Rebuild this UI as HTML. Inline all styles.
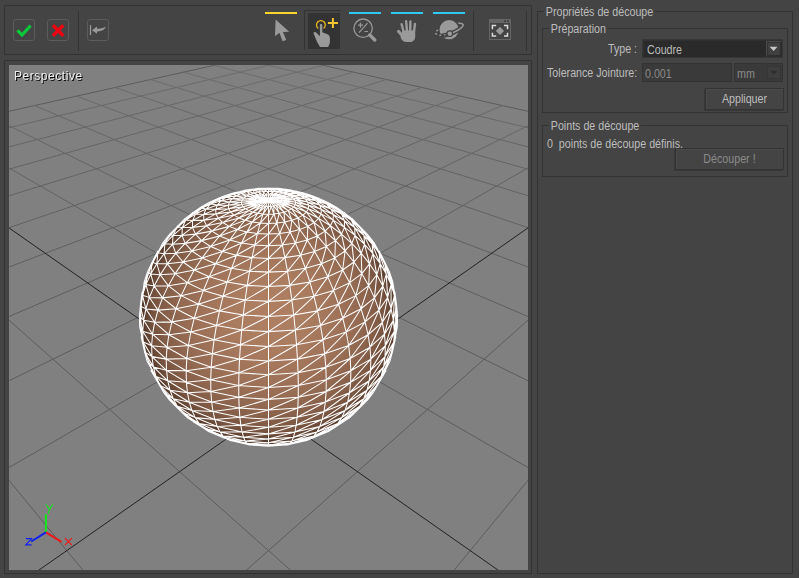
<!DOCTYPE html>
<html><head><meta charset="utf-8">
<style>
*{box-sizing:border-box;margin:0;padding:0}
html,body{width:799px;height:578px;overflow:hidden;background:#444444;font-family:"Liberation Sans",sans-serif;font-size:11px;color:#bcbcbc}
.a{position:absolute}
.frame{position:absolute;border:1px solid #333333}
.btn{position:absolute;width:22px;height:22px;border:1px solid #5c5c5c;border-radius:3px}
.sep{position:absolute;width:1px;background:#333333}
.bar{position:absolute;height:2px}
.txt{position:absolute;white-space:pre;font-size:12px;line-height:14px;transform:scaleX(0.89);transform-origin:0 0}
.gb{position:absolute;border:1px solid #333333}
.gbt{position:absolute;background:#444444;padding:0 2px 0 2px;white-space:pre;font-size:12px;line-height:14px;transform:scaleX(0.89);transform-origin:0 0}
</style></head><body>
<!-- toolbar -->
<div class="frame" style="left:4px;top:5px;width:528px;height:50px"></div>
<div class="btn" style="left:13px;top:19px"></div>
<svg class="a" style="left:13px;top:19px" width="22" height="22"><path d="M4.4 11.4L9 16L17.6 6.7" stroke="#0ac83a" stroke-width="3.2" fill="none"/></svg>
<div class="btn" style="left:47px;top:19px"></div>
<svg class="a" style="left:47px;top:19px" width="22" height="22"><path d="M5.9 6.3L16.3 16.7M16.3 6.3L5.9 16.7" stroke="#ec0510" stroke-width="3.4" fill="none"/></svg>
<div class="sep" style="left:78px;top:11px;height:40px"></div>
<div class="btn" style="left:87px;top:19px"></div>
<svg class="a" style="left:87px;top:19px" width="22" height="22"><path d="M3.5 6v10" stroke="#999" stroke-width="1.3"/><path d="M5 11.2L10 7.5V9.8C13 10 16 9.5 19 7.6C17.5 11 14.5 12.5 10 12.4V14.8Z" fill="#999"/></svg>

<div class="bar" style="left:265px;top:12px;width:32px;background:#fcd52c"></div>
<svg class="a" style="left:265px;top:15px" width="33" height="30"><path d="M10.6 4.6L10 21.3L14.4 17.7L17.6 26.3L21.2 25.1L18 16.9L24.2 16.7Z" fill="#9a9a9a"/></svg>

<div class="a" style="left:304px;top:10px;width:37px;height:40px;border-left:1px solid #333;border-top:1px solid #333"></div>
<div class="a" style="left:308px;top:13px;width:32px;height:36px;background:#333333"></div>
<svg class="a" style="left:308px;top:13px" width="32" height="36"><path d="M10.2 15.4A4.4 4.4 0 1 1 15.6 15.4" stroke="#e8b820" stroke-width="1.3" fill="none"/><path d="M19.9 10h10.1M24.9 5v9.9" stroke="#f2c630" stroke-width="2"/><path d="M11.9 12C11.9 10.6 14.3 10.6 14.3 12V19.3L19.5 21.3C21.2 22 21.9 23.5 21.9 25.5V29.5C21.5 31.5 20.3 33.2 20.3 34H12C11.2 32.5 9.8 30 8.8 28.2L5.6 20.6C5.2 19.2 6.8 18.3 7.8 19.3L11.9 23.2Z" fill="#9a9a9a"/></svg>

<div class="bar" style="left:349px;top:12px;width:32px;background:#2ec8f0"></div>
<svg class="a" style="left:349px;top:15px" width="33" height="30"><circle cx="14.1" cy="13.2" r="9.2" stroke="#999" stroke-width="1.3" fill="none"/><path d="M20.8 20L25.8 25" stroke="#999" stroke-width="3.4" stroke-linecap="round"/><path d="M9 10.2h5M11.5 7.7v5M10 17.6L18.5 8.2M15.4 16.5h3.6" stroke="#999" stroke-width="1.2"/></svg>

<div class="bar" style="left:391px;top:12px;width:32px;background:#2ec8f0"></div>
<svg class="a" style="left:391px;top:15px" width="33" height="30"><g stroke="#9a9a9a" stroke-linecap="round" fill="none"><path d="M10.6 9.2L13 18M15.1 6.2L16.1 17M19.4 6.5L19.2 17M24 9L22.7 18" stroke-width="2.4"/><path d="M7.5 16.3L12 21.5" stroke-width="2.9"/></g><path d="M11.8 15.5H24.2V21.5C24.2 25 22 27 18.5 27H15.5C12.5 27 10.5 25 9.6 22.2L9.8 19.5Z" fill="#9a9a9a"/></svg>

<div class="bar" style="left:433px;top:12px;width:32px;background:#2ec8f0"></div>
<svg class="a" style="left:433px;top:15px" width="33" height="30"><circle cx="16.1" cy="14.7" r="9.6" fill="#9a9a9a"/><path d="M28.97 8.73L29.45 8.97L29.80 9.28L30.01 9.64L30.08 10.05L30.01 10.50L29.80 11.00L29.46 11.54L28.98 12.10L28.37 12.70L27.64 13.31L26.80 13.94L25.84 14.57L24.79 15.21L23.66 15.84L22.45 16.46L21.17 17.06L19.85 17.64L18.48 18.19L17.10 18.70L15.70 19.17L14.31 19.60L12.93 19.98L11.59 20.31L10.29 20.58L9.05 20.79L7.88 20.95L6.79 21.03L5.80 21.06L4.91 21.02" stroke="#444" stroke-width="4.6" fill="none"/><path d="M25.32 8.37L26.15 8.34L26.91 8.35L27.59 8.41L28.21 8.50L28.74 8.64L29.18 8.82L29.54 9.04L29.81 9.29L29.99 9.58L30.07 9.91L30.06 10.27L29.96 10.65L29.77 11.07L29.48 11.51L29.10 11.97L28.64 12.44L28.10 12.94L27.47 13.44L26.77 13.95L26.00 14.47L25.16 14.99L24.26 15.51L23.31 16.02L22.30 16.53L21.26 17.02L20.18 17.49L19.08 17.95L17.95 18.39L16.82 18.80" stroke="#9a9a9a" stroke-width="1.5" fill="none"/><circle cx="16.8" cy="18.7" r="2.8" fill="#9a9a9a" stroke="#444" stroke-width="1.1"/><ellipse cx="4.2" cy="15.6" rx="1.1" ry="0.8" transform="rotate(-40 4.2 15.6)" fill="#9a9a9a"/><ellipse cx="3.1" cy="18.9" rx="1.2" ry="0.8" transform="rotate(30 3.1 18.9)" fill="#9a9a9a"/><ellipse cx="7.3" cy="20.2" rx="1.2" ry="0.75" fill="#9a9a9a"/><ellipse cx="11.7" cy="19.8" rx="0.9" ry="0.8" fill="#9a9a9a"/></svg>

<div class="sep" style="left:473px;top:11px;height:40px"></div>
<svg class="a" style="left:489px;top:19px" width="22" height="21"><rect x="0.5" y="0.5" width="21" height="20" fill="#444" stroke="#666"/><rect x="0" y="0" width="22" height="4" fill="#666"/><rect x="15" y="1.2" width="2" height="1.8" fill="#444"/><rect x="18" y="1.2" width="2" height="1.8" fill="#444"/><path d="M3.4 10.2V6.6H7.2M15 6.6H18.5V10.2M18.5 13.8V17H15M7.2 17H3.4V13.8" stroke="#dcdcdc" stroke-width="1.5" fill="none"/><path d="M10.95 7.8L15.05 11.95L10.95 16.05L6.85 11.95Z" fill="#999"/></svg>
<div class="sep" style="left:526px;top:11px;height:40px"></div>

<!-- viewport -->
<div class="frame" style="left:4px;top:60px;width:528px;height:514px"></div>
<div class="a" style="left:9px;top:65px;width:519px;height:505px;background:#808080;overflow:hidden">
<svg width="519" height="505" viewBox="0 0 519 505" style="position:absolute;left:0;top:0">
<defs><radialGradient id="sg" cx="0.5" cy="0.5" r="0.5" fx="0.52" fy="0.47"><stop offset="0.00" stop-color="#ad7e62"/><stop offset="0.10" stop-color="#ad7e62"/><stop offset="0.20" stop-color="#ab7d61"/><stop offset="0.30" stop-color="#a97b5f"/><stop offset="0.40" stop-color="#a5785d"/><stop offset="0.50" stop-color="#a0745a"/><stop offset="0.60" stop-color="#9a6f56"/><stop offset="0.70" stop-color="#926951"/><stop offset="0.80" stop-color="#87604a"/><stop offset="0.90" stop-color="#775440"/><stop offset="1.00" stop-color="#4e3426"/></radialGradient></defs>
<path d="M259.5 -11.9L233.14 -5.99M233.14 -5.99L204.86 0.36M204.86 0.36L174.44 7.18M174.44 7.18L141.62 14.53M141.62 14.53L106.12 22.49M106.12 22.49L67.59 31.13M67.59 31.13L25.63 40.54M25.63 40.54L-20.25 50.83M-20.25 50.83L-70.63 62.12M-70.63 62.12L-126.19 74.58M-126.19 74.58L-187.78 88.39M-187.78 88.39L-256.43 103.78M-256.43 103.78L-333.44 121.05M-333.44 121.05L-420.44 140.55M-420.44 140.55L-519.49 162.76M-519.49 162.76L-633.29 188.28M-633.29 188.28L-765.41 217.9M-765.41 217.9L-920.64 252.7M-920.64 252.7L-1105.63 294.18M-1105.63 294.18L-1329.86 344.46M259.5 -11.9L285.86 -5.99M285.86 -5.99L314.14 0.36M314.14 0.36L344.56 7.18M344.56 7.18L377.38 14.53M377.38 14.53L412.88 22.49M412.88 22.49L451.41 31.13M451.41 31.13L493.37 40.54M493.37 40.54L539.25 50.83M539.25 50.83L589.63 62.12M589.63 62.12L645.19 74.58M645.19 74.58L706.78 88.39M706.78 88.39L775.43 103.78M775.43 103.78L852.44 121.05M852.44 121.05L939.44 140.55M939.44 140.55L1038.49 162.76M1038.49 162.76L1152.29 188.28M1152.29 188.28L1284.41 217.9M1284.41 217.9L1439.64 252.7M1439.64 252.7L1624.63 294.18M1624.63 294.18L1848.86 344.46M-961.93 294.18L-1170.92 344.46M-1170.92 344.46L-1429.5 406.66M1480.93 294.18L1689.92 344.46M1689.92 344.46L1948.5 406.66M-818.23 294.18L-1011.99 344.46M-1011.99 344.46L-1251.71 406.66M-1251.71 406.66L-1555.95 485.6M1337.23 294.18L1530.99 344.46M1530.99 344.46L1770.71 406.66M1770.71 406.66L2074.95 485.6M-674.54 294.18L-853.05 344.46M-853.05 344.46L-1073.92 406.66M-1073.92 406.66L-1354.24 485.6M-1354.24 485.6L-1721.74 589.1M1193.54 294.18L1372.05 344.46M1372.05 344.46L1592.92 406.66M1592.92 406.66L1873.24 485.6M1873.24 485.6L2240.74 589.1M-530.84 294.18L-694.12 344.46M-694.12 344.46L-896.13 406.66M-896.13 406.66L-1152.52 485.6M-1152.52 485.6L-1488.65 589.1M-1488.65 589.1L-1948.59 730.72M1049.84 294.18L1213.12 344.46M1213.12 344.46L1415.13 406.66M1415.13 406.66L1671.52 485.6M1671.52 485.6L2007.65 589.1M2007.65 589.1L2467.59 730.72M-387.14 294.18L-535.18 344.46M-535.18 344.46L-718.34 406.66M-718.34 406.66L-950.8 485.6M-950.8 485.6L-1255.57 589.1M-1255.57 589.1L-1672.58 730.72M-1672.58 730.72L-2277.85 936.27M906.14 294.18L1054.18 344.46M1054.18 344.46L1237.34 406.66M1237.34 406.66L1469.8 485.6M1469.8 485.6L1774.57 589.1M1774.57 589.1L2191.58 730.72M2191.58 730.72L2796.85 936.27M-243.44 294.18L-376.24 344.46M-376.24 344.46L-540.55 406.66M-540.55 406.66L-749.08 485.6M-749.08 485.6L-1022.48 589.1M-1022.48 589.1L-1396.57 730.72M-1396.57 730.72L-1939.53 936.27M-1939.53 936.27L-2799.08 1261.67M762.44 294.18L895.24 344.46M895.24 344.46L1059.55 406.66M1059.55 406.66L1268.08 485.6M1268.08 485.6L1541.48 589.1M1541.48 589.1L1915.57 730.72M1915.57 730.72L2458.53 936.27M2458.53 936.27L3318.08 1261.67M-99.74 294.18L-217.31 344.46M-217.31 344.46L-362.76 406.66M-362.76 406.66L-547.37 485.6M-547.37 485.6L-789.39 589.1M-789.39 589.1L-1120.55 730.72M-1120.55 730.72L-1601.22 936.27M-1601.22 936.27L-2362.14 1261.67M-2362.14 1261.67L-3749.27 1854.87M618.74 294.18L736.31 344.46M736.31 344.46L881.76 406.66M881.76 406.66L1066.37 485.6M1066.37 485.6L1308.39 589.1M1308.39 589.1L1639.55 730.72M1639.55 730.72L2120.22 936.27M2120.22 936.27L2881.14 1261.67M2881.14 1261.67L4268.27 1854.87M43.95 294.18L-58.37 344.46M-58.37 344.46L-184.97 406.66M-184.97 406.66L-345.65 485.6M-345.65 485.6L-556.3 589.1M-556.3 589.1L-844.54 730.72M-844.54 730.72L-1262.91 936.27M-1262.91 936.27L-1925.2 1261.67M-1925.2 1261.67L-3132.53 1854.87M-3132.53 1854.87L-6028.18 3277.57M475.05 294.18L577.37 344.46M577.37 344.46L703.97 406.66M703.97 406.66L864.65 485.6M864.65 485.6L1075.3 589.1M1075.3 589.1L1363.54 730.72M1363.54 730.72L1781.91 936.27M1781.91 936.27L2444.2 1261.67M2444.2 1261.67L3651.53 1854.87M3651.53 1854.87L6547.18 3277.57M187.65 294.18L100.56 344.46M100.56 344.46L-7.18 406.66M-7.18 406.66L-143.93 485.6M-143.93 485.6L-323.22 589.1M-323.22 589.1L-568.53 730.72M-568.53 730.72L-924.59 936.27M-924.59 936.27L-1488.26 1261.67M-1488.26 1261.67L-2515.8 1854.87M-2515.8 1854.87L-4980.23 3277.57M-4980.23 3277.57L-18901.1 11314M331.35 294.18L418.44 344.46M418.44 344.46L526.18 406.66M526.18 406.66L662.93 485.6M662.93 485.6L842.22 589.1M842.22 589.1L1087.53 730.72M1087.53 730.72L1443.59 936.27M1443.59 936.27L2007.26 1261.67M2007.26 1261.67L3034.8 1854.87M3034.8 1854.87L5499.23 3277.57M5499.23 3277.57L19420.1 11314M475.05 294.18L418.44 344.46M418.44 344.46L348.39 406.66M348.39 406.66L259.5 485.6M259.5 485.6L142.96 589.1M142.96 589.1L-16.51 730.72M-16.51 730.72L-247.97 936.27M-247.97 936.27L-614.38 1261.67M-614.38 1261.67L-1282.33 1854.87M-1282.33 1854.87L-2884.34 3277.57M-2884.34 3277.57L-11933.61 11314M-11933.61 11314L-63331.14 56958.85M43.95 294.18L100.56 344.46M100.56 344.46L170.61 406.66M170.61 406.66L259.5 485.6M259.5 485.6L376.04 589.1M376.04 589.1L535.51 730.72M535.51 730.72L766.97 936.27M766.97 936.27L1133.38 1261.67M1133.38 1261.67L1801.33 1854.87M1801.33 1854.87L3403.34 3277.57M3403.34 3277.57L12452.61 11314M12452.61 11314L63850.14 56958.85M618.74 294.18L577.37 344.46M577.37 344.46L526.18 406.66M526.18 406.66L461.22 485.6M461.22 485.6L376.04 589.1M376.04 589.1L259.5 730.72M259.5 730.72L90.34 936.27M90.34 936.27L-177.44 1261.67M-177.44 1261.67L-665.6 1854.87M-665.6 1854.87L-1836.39 3277.57M-1836.39 3277.57L-8449.86 11314M-8449.86 11314L-46012.68 56958.85M-99.74 294.18L-58.37 344.46M-58.37 344.46L-7.18 406.66M-7.18 406.66L57.78 485.6M57.78 485.6L142.96 589.1M142.96 589.1L259.5 730.72M259.5 730.72L428.66 936.27M428.66 936.27L696.44 1261.67M696.44 1261.67L1184.6 1854.87M1184.6 1854.87L2355.39 3277.57M2355.39 3277.57L8968.86 11314M8968.86 11314L46531.68 56958.85M762.44 294.18L736.31 344.46M736.31 344.46L703.97 406.66M703.97 406.66L662.93 485.6M662.93 485.6L609.13 589.1M609.13 589.1L535.51 730.72M535.51 730.72L428.66 936.27M428.66 936.27L259.5 1261.67M259.5 1261.67L-48.87 1854.87M-48.87 1854.87L-788.45 3277.57M-788.45 3277.57L-4966.12 11314M-4966.12 11314L-28694.22 56958.85M-243.44 294.18L-217.31 344.46M-217.31 344.46L-184.97 406.66M-184.97 406.66L-143.93 485.6M-143.93 485.6L-90.13 589.1M-90.13 589.1L-16.51 730.72M-16.51 730.72L90.34 936.27M90.34 936.27L259.5 1261.67M259.5 1261.67L567.87 1854.87M567.87 1854.87L1307.45 3277.57M1307.45 3277.57L5485.12 11314M5485.12 11314L29213.22 56958.85M906.14 294.18L895.24 344.46M895.24 344.46L881.76 406.66M881.76 406.66L864.65 485.6M864.65 485.6L842.22 589.1M842.22 589.1L811.52 730.72M811.52 730.72L766.97 936.27M766.97 936.27L696.44 1261.67M696.44 1261.67L567.87 1854.87M567.87 1854.87L259.5 3277.57M259.5 3277.57L-1482.37 11314M-1482.37 11314L-11375.77 56958.85M-387.14 294.18L-376.24 344.46M-376.24 344.46L-362.76 406.66M-362.76 406.66L-345.65 485.6M-345.65 485.6L-323.22 589.1M-323.22 589.1L-292.52 730.72M-292.52 730.72L-247.97 936.27M-247.97 936.27L-177.44 1261.67M-177.44 1261.67L-48.87 1854.87M-48.87 1854.87L259.5 3277.57M259.5 3277.57L2001.37 11314M2001.37 11314L11894.77 56958.85M1049.84 294.18L1054.18 344.46M1054.18 344.46L1059.55 406.66M1059.55 406.66L1066.37 485.6M1066.37 485.6L1075.3 589.1M1075.3 589.1L1087.53 730.72M1087.53 730.72L1105.28 936.27M1105.28 936.27L1133.38 1261.67M1133.38 1261.67L1184.6 1854.87M1184.6 1854.87L1307.45 3277.57M1307.45 3277.57L2001.37 11314M2001.37 11314L5942.69 56958.85M-530.84 294.18L-535.18 344.46M-535.18 344.46L-540.55 406.66M-540.55 406.66L-547.37 485.6M-547.37 485.6L-556.3 589.1M-556.3 589.1L-568.53 730.72M-568.53 730.72L-586.28 936.27M-586.28 936.27L-614.38 1261.67M-614.38 1261.67L-665.6 1854.87M-665.6 1854.87L-788.45 3277.57M-788.45 3277.57L-1482.37 11314M-1482.37 11314L-5423.69 56958.85M1193.54 294.18L1213.12 344.46M1213.12 344.46L1237.34 406.66M1237.34 406.66L1268.08 485.6M1268.08 485.6L1308.39 589.1M1308.39 589.1L1363.54 730.72M1363.54 730.72L1443.59 936.27M1443.59 936.27L1570.32 1261.67M1570.32 1261.67L1801.33 1854.87M1801.33 1854.87L2355.39 3277.57M2355.39 3277.57L5485.12 11314M5485.12 11314L23261.15 56958.85M-674.54 294.18L-694.12 344.46M-694.12 344.46L-718.34 406.66M-718.34 406.66L-749.08 485.6M-749.08 485.6L-789.39 589.1M-789.39 589.1L-844.54 730.72M-844.54 730.72L-924.59 936.27M-924.59 936.27L-1051.32 1261.67M-1051.32 1261.67L-1282.33 1854.87M-1282.33 1854.87L-1836.39 3277.57M-1836.39 3277.57L-4966.12 11314M-4966.12 11314L-22742.15 56958.85M1337.23 294.18L1372.05 344.46M1372.05 344.46L1415.13 406.66M1415.13 406.66L1469.8 485.6M1469.8 485.6L1541.48 589.1M1541.48 589.1L1639.55 730.72M1639.55 730.72L1781.91 936.27M1781.91 936.27L2007.26 1261.67M2007.26 1261.67L2418.07 1854.87M2418.07 1854.87L3403.34 3277.57M3403.34 3277.57L8968.86 11314M8968.86 11314L40579.61 56958.85M-818.23 294.18L-853.05 344.46M-853.05 344.46L-896.13 406.66M-896.13 406.66L-950.8 485.6M-950.8 485.6L-1022.48 589.1M-1022.48 589.1L-1120.55 730.72M-1120.55 730.72L-1262.91 936.27M-1262.91 936.27L-1488.26 1261.67M-1488.26 1261.67L-1899.07 1854.87M-1899.07 1854.87L-2884.34 3277.57M-2884.34 3277.57L-8449.86 11314M-8449.86 11314L-40060.61 56958.85M1480.93 294.18L1530.99 344.46M1530.99 344.46L1592.92 406.66M1592.92 406.66L1671.52 485.6M1671.52 485.6L1774.57 589.1M1774.57 589.1L1915.57 730.72M1915.57 730.72L2120.22 936.27M2120.22 936.27L2444.2 1261.67M2444.2 1261.67L3034.8 1854.87M3034.8 1854.87L4451.29 3277.57M4451.29 3277.57L12452.61 11314M12452.61 11314L57898.07 56958.85M-961.93 294.18L-1011.99 344.46M-1011.99 344.46L-1073.92 406.66M-1073.92 406.66L-1152.52 485.6M-1152.52 485.6L-1255.57 589.1M-1255.57 589.1L-1396.57 730.72M-1396.57 730.72L-1601.22 936.27M-1601.22 936.27L-1925.2 1261.67M-1925.2 1261.67L-2515.8 1854.87M-2515.8 1854.87L-3932.29 3277.57M-3932.29 3277.57L-11933.61 11314M-11933.61 11314L-57379.07 56958.85M1624.63 294.18L1689.92 344.46M1689.92 344.46L1770.71 406.66M1770.71 406.66L1873.24 485.6M1873.24 485.6L2007.65 589.1M2007.65 589.1L2191.58 730.72M2191.58 730.72L2458.53 936.27M2458.53 936.27L2881.14 1261.67M2881.14 1261.67L3651.53 1854.87M3651.53 1854.87L5499.23 3277.57M5499.23 3277.57L15936.35 11314M15936.35 11314L75216.53 56958.85M-1105.63 294.18L-1170.92 344.46M-1170.92 344.46L-1251.71 406.66M-1251.71 406.66L-1354.24 485.6M-1354.24 485.6L-1488.65 589.1M-1488.65 589.1L-1672.58 730.72M-1672.58 730.72L-1939.53 936.27M-1939.53 936.27L-2362.14 1261.67M-2362.14 1261.67L-3132.53 1854.87M-3132.53 1854.87L-4980.23 3277.57M-4980.23 3277.57L-15417.35 11314M-15417.35 11314L-74697.53 56958.85M1848.86 344.46L1948.5 406.66M1948.5 406.66L2074.95 485.6M2074.95 485.6L2240.74 589.1M2240.74 589.1L2467.59 730.72M2467.59 730.72L2796.85 936.27M2796.85 936.27L3318.08 1261.67M3318.08 1261.67L4268.27 1854.87M4268.27 1854.87L6547.18 3277.57M6547.18 3277.57L19420.1 11314M19420.1 11314L92534.99 56958.85M-1329.86 344.46L-1429.5 406.66M-1429.5 406.66L-1555.95 485.6M-1555.95 485.6L-1721.74 589.1M-1721.74 589.1L-1948.59 730.72M-1948.59 730.72L-2277.85 936.27M-2277.85 936.27L-2799.08 1261.67M-2799.08 1261.67L-3749.27 1854.87M-3749.27 1854.87L-6028.18 3277.57M-6028.18 3277.57L-18901.1 11314M-18901.1 11314L-92015.99 56958.85" stroke="#5c5c5c" stroke-width="1" fill="none"/><path d="M-789.51 252.7L-961.93 294.18M1308.51 252.7L1480.93 294.18M-658.38 252.7L-818.23 294.18M1177.38 252.7L1337.23 294.18M-527.26 252.7L-674.54 294.18M1046.26 252.7L1193.54 294.18M-396.13 252.7L-530.84 294.18M915.13 252.7L1049.84 294.18M-265 252.7L-387.14 294.18M784 252.7L906.14 294.18M-133.88 252.7L-243.44 294.18M652.88 252.7L762.44 294.18M-2.75 252.7L-99.74 294.18M521.75 252.7L618.74 294.18M128.37 252.7L43.95 294.18M390.63 252.7L475.05 294.18M259.5 252.7L187.65 294.18M259.5 252.7L331.35 294.18M521.75 252.7L475.05 294.18M-2.75 252.7L43.95 294.18M652.88 252.7L618.74 294.18M-133.88 252.7L-99.74 294.18M784 252.7L762.44 294.18M-265 252.7L-243.44 294.18M915.13 252.7L906.14 294.18M-396.13 252.7L-387.14 294.18M1046.26 252.7L1049.84 294.18M-527.26 252.7L-530.84 294.18M1177.38 252.7L1193.54 294.18M-658.38 252.7L-674.54 294.18M1308.51 252.7L1337.23 294.18M-789.51 252.7L-818.23 294.18M1439.64 252.7L1480.93 294.18M-920.64 252.7L-961.93 294.18" stroke="#5d5d5d" stroke-width="1" fill="none"/><path d="M-644.83 217.9L-789.51 252.7M1163.83 217.9L1308.51 252.7M-524.25 217.9L-658.38 252.7M1043.25 217.9L1177.38 252.7M-403.67 217.9L-527.26 252.7M922.67 217.9L1046.26 252.7M-283.1 217.9L-396.13 252.7M802.1 217.9L915.13 252.7M-162.52 217.9L-265 252.7M681.52 217.9L784 252.7M-41.94 217.9L-133.88 252.7M560.94 217.9L652.88 252.7M78.63 217.9L-2.75 252.7M440.37 217.9L521.75 252.7M199.21 217.9L128.37 252.7M319.79 217.9L390.63 252.7M319.79 217.9L259.5 252.7M199.21 217.9L259.5 252.7M560.94 217.9L521.75 252.7M-41.94 217.9L-2.75 252.7M681.52 217.9L652.88 252.7M-162.52 217.9L-133.88 252.7M802.1 217.9L784 252.7M-283.1 217.9L-265 252.7M922.67 217.9L915.13 252.7M-403.67 217.9L-396.13 252.7M1043.25 217.9L1046.26 252.7M-524.25 217.9L-527.26 252.7M1163.83 217.9L1177.38 252.7M-644.83 217.9L-658.38 252.7M1284.41 217.9L1308.51 252.7M-765.41 217.9L-789.51 252.7" stroke="#5e5e5e" stroke-width="1" fill="none"/><path d="M-521.69 188.28L-644.83 217.9M1040.69 188.28L1163.83 217.9M-410.1 188.28L-524.25 217.9M929.1 188.28L1043.25 217.9M-298.5 188.28L-403.67 217.9M817.5 188.28L922.67 217.9M-186.9 188.28L-283.1 217.9M705.9 188.28L802.1 217.9M-75.3 188.28L-162.52 217.9M594.3 188.28L681.52 217.9M36.3 188.28L-41.94 217.9M482.7 188.28L560.94 217.9M147.9 188.28L78.63 217.9M371.1 188.28L440.37 217.9M259.5 188.28L199.21 217.9M259.5 188.28L319.79 217.9M371.1 188.28L319.79 217.9M147.9 188.28L199.21 217.9M594.3 188.28L560.94 217.9M-75.3 188.28L-41.94 217.9M705.9 188.28L681.52 217.9M-186.9 188.28L-162.52 217.9M817.5 188.28L802.1 217.9M-298.5 188.28L-283.1 217.9M929.1 188.28L922.67 217.9M-410.1 188.28L-403.67 217.9M1040.69 188.28L1043.25 217.9M-521.69 188.28L-524.25 217.9M1152.29 188.28L1163.83 217.9M-633.29 188.28L-644.83 217.9" stroke="#5f5f5f" stroke-width="1" fill="none"/><path d="M-415.63 162.76L-521.69 188.28M934.63 162.76L1040.69 188.28M-311.76 162.76L-410.1 188.28M830.76 162.76L929.1 188.28M-207.89 162.76L-298.5 188.28M726.89 162.76L817.5 188.28M-104.03 162.76L-186.9 188.28M623.03 162.76L705.9 188.28M-0.16 162.76L-75.3 188.28M519.16 162.76L594.3 188.28M103.7 162.76L36.3 188.28M415.3 162.76L482.7 188.28M207.57 162.76L147.9 188.28M311.43 162.76L371.1 188.28M311.43 162.76L259.5 188.28M207.57 162.76L259.5 188.28M415.3 162.76L371.1 188.28M103.7 162.76L147.9 188.28M623.03 162.76L594.3 188.28M-104.03 162.76L-75.3 188.28M726.89 162.76L705.9 188.28M-207.89 162.76L-186.9 188.28M830.76 162.76L817.5 188.28M-311.76 162.76L-298.5 188.28M934.63 162.76L929.1 188.28M-415.63 162.76L-410.1 188.28M1038.49 162.76L1040.69 188.28M-519.49 162.76L-521.69 188.28" stroke="#606060" stroke-width="1" fill="none"/><path d="M-323.31 140.55L-415.63 162.76M842.31 140.55L934.63 162.76M-226.17 140.55L-311.76 162.76M745.17 140.55L830.76 162.76M-129.04 140.55L-207.89 162.76M648.04 140.55L726.89 162.76M-31.9 140.55L-104.03 162.76M550.9 140.55L623.03 162.76M65.23 140.55L-0.16 162.76M453.77 140.55L519.16 162.76M162.37 140.55L103.7 162.76M356.63 140.55L415.3 162.76M259.5 140.55L207.57 162.76M259.5 140.55L311.43 162.76M356.63 140.55L311.43 162.76M162.37 140.55L207.57 162.76M453.77 140.55L415.3 162.76M65.23 140.55L103.7 162.76M648.04 140.55L623.03 162.76M-129.04 140.55L-104.03 162.76M745.17 140.55L726.89 162.76M-226.17 140.55L-207.89 162.76M842.31 140.55L830.76 162.76M-323.31 140.55L-311.76 162.76M939.44 140.55L934.63 162.76M-420.44 140.55L-415.63 162.76" stroke="#616161" stroke-width="1" fill="none"/><path d="M-242.22 121.05L-323.31 140.55M761.22 121.05L842.31 140.55M-151 121.05L-226.17 140.55M670 121.05L745.17 140.55M-59.78 121.05L-129.04 140.55M578.78 121.05L648.04 140.55M31.44 121.05L-31.9 140.55M487.56 121.05L550.9 140.55M122.67 121.05L65.23 140.55M396.33 121.05L453.77 140.55M213.89 121.05L162.37 140.55M305.11 121.05L356.63 140.55M305.11 121.05L259.5 140.55M213.89 121.05L259.5 140.55M396.33 121.05L356.63 140.55M122.67 121.05L162.37 140.55M487.56 121.05L453.77 140.55M31.44 121.05L65.23 140.55M670 121.05L648.04 140.55M-151 121.05L-129.04 140.55M761.22 121.05L745.17 140.55M-242.22 121.05L-226.17 140.55M852.44 121.05L842.31 140.55M-333.44 121.05L-323.31 140.55" stroke="#626262" stroke-width="1" fill="none"/><path d="M-170.44 103.78L-242.22 121.05M689.44 103.78L761.22 121.05M-84.45 103.78L-151 121.05M603.45 103.78L670 121.05M1.53 103.78L-59.78 121.05M517.47 103.78L578.78 121.05M87.52 103.78L31.44 121.05M431.48 103.78L487.56 121.05M173.51 103.78L122.67 121.05M345.49 103.78L396.33 121.05M259.5 103.78L213.89 121.05M259.5 103.78L305.11 121.05M345.49 103.78L305.11 121.05M173.51 103.78L213.89 121.05M431.48 103.78L396.33 121.05M87.52 103.78L122.67 121.05M517.47 103.78L487.56 121.05M1.53 103.78L31.44 121.05M689.44 103.78L670 121.05M-170.44 103.78L-151 121.05M775.43 103.78L761.22 121.05M-256.43 103.78L-242.22 121.05" stroke="#636363" stroke-width="1" fill="none"/><path d="M-106.45 88.39L-170.44 103.78M625.45 88.39L689.44 103.78M-25.13 88.39L-84.45 103.78M544.13 88.39L603.45 103.78M56.19 88.39L1.53 103.78M462.81 88.39L517.47 103.78M137.52 88.39L87.52 103.78M381.48 88.39L431.48 103.78M218.84 88.39L173.51 103.78M300.16 88.39L345.49 103.78M300.16 88.39L259.5 103.78M218.84 88.39L259.5 103.78M381.48 88.39L345.49 103.78M137.52 88.39L173.51 103.78M462.81 88.39L431.48 103.78M56.19 88.39L87.52 103.78M544.13 88.39L517.47 103.78M-25.13 88.39L1.53 103.78M706.78 88.39L689.44 103.78M-187.78 88.39L-170.44 103.78" stroke="#646464" stroke-width="1" fill="none"/><path d="M-49.05 74.58L-106.45 88.39M568.05 74.58L625.45 88.39M28.09 74.58L-25.13 88.39M490.91 74.58L544.13 88.39M105.22 74.58L56.19 88.39M413.78 74.58L462.81 88.39M182.36 74.58L137.52 88.39M336.64 74.58L381.48 88.39M259.5 74.58L218.84 88.39M259.5 74.58L300.16 88.39M336.64 74.58L300.16 88.39M182.36 74.58L218.84 88.39M413.78 74.58L381.48 88.39M105.22 74.58L137.52 88.39M490.91 74.58L462.81 88.39M28.09 74.58L56.19 88.39M568.05 74.58L544.13 88.39M-49.05 74.58L-25.13 88.39" stroke="#656565" stroke-width="1" fill="none"/><path d="M2.73 62.12L-49.05 74.58M516.27 62.12L568.05 74.58M76.09 62.12L28.09 74.58M442.91 62.12L490.91 74.58M149.46 62.12L105.22 74.58M369.54 62.12L413.78 74.58M222.82 62.12L182.36 74.58M296.18 62.12L336.64 74.58M296.18 62.12L259.5 74.58M222.82 62.12L259.5 74.58M369.54 62.12L336.64 74.58M149.46 62.12L182.36 74.58M442.91 62.12L413.78 74.58M76.09 62.12L105.22 74.58M516.27 62.12L490.91 74.58M2.73 62.12L28.09 74.58M589.63 62.12L568.05 74.58M-70.63 62.12L-49.05 74.58" stroke="#666666" stroke-width="1" fill="none"/><path d="M49.68 50.83L2.73 62.12M469.32 50.83L516.27 62.12M119.62 50.83L76.09 62.12M399.38 50.83L442.91 62.12M189.56 50.83L149.46 62.12M329.44 50.83L369.54 62.12M259.5 50.83L222.82 62.12M259.5 50.83L296.18 62.12M329.44 50.83L296.18 62.12M189.56 50.83L222.82 62.12M399.38 50.83L369.54 62.12M119.62 50.83L149.46 62.12M469.32 50.83L442.91 62.12M49.68 50.83L76.09 62.12M539.25 50.83L516.27 62.12M-20.25 50.83L2.73 62.12" stroke="#676767" stroke-width="1" fill="none"/><path d="M92.45 40.54L49.68 50.83M426.55 40.54L469.32 50.83M159.27 40.54L119.62 50.83M359.73 40.54L399.38 50.83M226.09 40.54L189.56 50.83M292.91 40.54L329.44 50.83M292.91 40.54L259.5 50.83M226.09 40.54L259.5 50.83M359.73 40.54L329.44 50.83M159.27 40.54L189.56 50.83M426.55 40.54L399.38 50.83M92.45 40.54L119.62 50.83M493.37 40.54L469.32 50.83M25.63 40.54L49.68 50.83" stroke="#686868" stroke-width="1" fill="none"/><path d="M131.56 31.13L92.45 40.54M387.44 31.13L426.55 40.54M195.53 31.13L159.27 40.54M323.47 31.13L359.73 40.54M259.5 31.13L226.09 40.54M259.5 31.13L292.91 40.54M323.47 31.13L292.91 40.54M195.53 31.13L226.09 40.54M387.44 31.13L359.73 40.54M131.56 31.13L159.27 40.54M451.41 31.13L426.55 40.54M67.59 31.13L92.45 40.54" stroke="#696969" stroke-width="1" fill="none"/><path d="M167.47 22.49L131.56 31.13M351.53 22.49L387.44 31.13M228.82 22.49L195.53 31.13M290.18 22.49L323.47 31.13M290.18 22.49L259.5 31.13M228.82 22.49L259.5 31.13M351.53 22.49L323.47 31.13M167.47 22.49L195.53 31.13M412.88 22.49L387.44 31.13M106.12 22.49L131.56 31.13" stroke="#6a6a6a" stroke-width="1" fill="none"/><path d="M200.56 14.53L167.47 22.49M318.44 14.53L351.53 22.49M259.5 14.53L228.82 22.49M259.5 14.53L290.18 22.49M318.44 14.53L290.18 22.49M200.56 14.53L228.82 22.49M377.38 14.53L351.53 22.49M141.62 14.53L167.47 22.49" stroke="#6b6b6b" stroke-width="1" fill="none"/><path d="M231.15 7.18L200.56 14.53M287.85 7.18L318.44 14.53M287.85 7.18L259.5 14.53M231.15 7.18L259.5 14.53M344.56 7.18L318.44 14.53M174.44 7.18L200.56 14.53" stroke="#6c6c6c" stroke-width="1" fill="none"/><path d="M259.5 0.36L231.15 7.18M259.5 0.36L287.85 7.18M314.14 0.36L287.85 7.18M204.86 0.36L231.15 7.18" stroke="#6d6d6d" stroke-width="1" fill="none"/><path d="M285.86 -5.99L259.5 0.36M233.14 -5.99L259.5 0.36" stroke="#6e6e6e" stroke-width="1" fill="none"/>
<path d="M645.19 74.58L-80649.6 56958.85M-126.19 74.58L81168.6 56958.85" stroke="#1c1c1c" stroke-width="0.95" fill="none"/>
<circle cx="259.5" cy="252.16" r="128.3" fill="url(#sg)"/>
<path d="M297.58 375.6L319.42 366.61M297.58 375.6L301.33 373.97M297.58 375.6L279.06 379.83M279.06 379.83L301.33 373.97M279.06 379.83L281 378.61M279.06 379.83L259.5 381.27M259.5 381.27L281 378.61M259.5 381.27L259.5 380.19M259.5 381.27L239.94 379.83M239.94 379.83L259.5 380.19M239.94 379.83L238 378.61M239.94 379.83L221.42 375.6M221.42 375.6L238 378.61M221.42 375.6L217.67 373.97M204.89 368.87L217.67 373.97M319.42 366.61L340.46 352.84M319.42 366.61L324.34 363.16M319.42 366.61L301.33 373.97M301.33 373.97L324.34 363.16M301.33 373.97L304.81 371.09M301.33 373.97L281 378.61M281 378.61L304.81 371.09M281 378.61L282.81 376.09M281 378.61L259.5 380.19M259.5 380.19L282.81 376.09M259.5 380.19L259.5 377.8M259.5 380.19L238 378.61M238 378.61L259.5 377.8M238 378.61L236.19 376.09M238 378.61L217.67 373.97M217.67 373.97L236.19 376.09M217.67 373.97L214.19 371.09M217.67 373.97L199.58 366.61M199.58 366.61L214.19 371.09M199.58 366.61L194.66 363.16M184.58 357L194.66 363.16M340.46 352.84L345.91 347.58M340.46 352.84L324.34 363.16M324.34 363.16L345.91 347.58M324.34 363.16L328.8 358.5M324.34 363.16L304.81 371.09M304.81 371.09L328.8 358.5M304.81 371.09L307.98 366.91M304.81 371.09L282.81 376.09M282.81 376.09L307.98 366.91M282.81 376.09L284.46 372.22M282.81 376.09L259.5 377.8M259.5 377.8L284.46 372.22M259.5 377.8L259.5 374.04M259.5 377.8L236.19 376.09M236.19 376.09L259.5 374.04M236.19 376.09L234.54 372.22M236.19 376.09L214.19 371.09M214.19 371.09L234.54 372.22M214.19 371.09L211.02 366.91M214.19 371.09L194.66 363.16M194.66 363.16L211.02 366.91M194.66 363.16L190.2 358.5M194.66 363.16L178.54 352.84M178.54 352.84L190.2 358.5M178.54 352.84L173.09 347.58M345.91 347.58L350.7 341.21M345.91 347.58L328.8 358.5M328.8 358.5L350.7 341.21M328.8 358.5L332.72 352.61M328.8 358.5L307.98 366.91M307.98 366.91L332.72 352.61M307.98 366.91L310.77 361.41M307.98 366.91L284.46 372.22M284.46 372.22L310.77 361.41M284.46 372.22L285.91 366.97M284.46 372.22L259.5 374.04M259.5 374.04L285.91 366.97M259.5 374.04L259.5 368.88M259.5 374.04L234.54 372.22M234.54 372.22L259.5 368.88M234.54 372.22L233.09 366.97M234.54 372.22L211.02 366.91M211.02 366.91L233.09 366.97M211.02 366.91L208.23 361.41M211.02 366.91L190.2 358.5M190.2 358.5L208.23 361.41M190.2 358.5L186.28 352.61M190.2 358.5L173.09 347.58M173.09 347.58L186.28 352.61M173.09 347.58L168.3 341.21M173.09 347.58L160.34 334.86M160.34 334.86L168.3 341.21M160.34 334.86L154.98 327.97M358.66 334.86L364.02 327.97M358.66 334.86L345.91 347.58M345.91 347.58L364.02 327.97M350.7 341.21L354.74 333.76M350.7 341.21L332.72 352.61M332.72 352.61L354.74 333.76M332.72 352.61L336.04 345.51M332.72 352.61L310.77 361.41M310.77 361.41L336.04 345.51M310.77 361.41L313.13 354.59M310.77 361.41L285.91 366.97M285.91 366.97L313.13 354.59M285.91 366.97L287.13 360.34M285.91 366.97L259.5 368.88M259.5 368.88L287.13 360.34M259.5 368.88L259.5 362.3M259.5 368.88L233.09 366.97M233.09 366.97L259.5 362.3M233.09 366.97L231.87 360.34M233.09 366.97L208.23 361.41M208.23 361.41L231.87 360.34M208.23 361.41L205.87 354.59M208.23 361.41L186.28 352.61M186.28 352.61L205.87 354.59M186.28 352.61L182.96 345.51M186.28 352.61L168.3 341.21M168.3 341.21L182.96 345.51M168.3 341.21L164.26 333.76M168.3 341.21L154.98 327.97M154.98 327.97L164.26 333.76M154.98 327.97L150.48 320.14M146.64 313.65L150.48 320.14M364.02 327.97L368.52 320.14M364.02 327.97L350.7 341.21M350.7 341.21L368.52 320.14M354.74 333.76L357.93 325.26M354.74 333.76L336.04 345.51M336.04 345.51L357.93 325.26M336.04 345.51L338.67 337.21M336.04 345.51L313.13 354.59M313.13 354.59L338.67 337.21M313.13 354.59L315.01 346.46M313.13 354.59L287.13 360.34M287.13 360.34L315.01 346.46M287.13 360.34L288.11 352.32M287.13 360.34L259.5 362.3M259.5 362.3L288.11 352.32M259.5 362.3L259.5 354.33M259.5 362.3L231.87 360.34M231.87 360.34L259.5 354.33M231.87 360.34L230.89 352.32M231.87 360.34L205.87 354.59M205.87 354.59L230.89 352.32M205.87 354.59L203.99 346.46M205.87 354.59L182.96 345.51M182.96 345.51L203.99 346.46M182.96 345.51L180.33 337.21M182.96 345.51L164.26 333.76M164.26 333.76L180.33 337.21M164.26 333.76L161.07 325.26M164.26 333.76L150.48 320.14M150.48 320.14L161.07 325.26M150.48 320.14L146.92 311.43M150.48 320.14L141.92 305.46M141.92 305.46L146.92 311.43M377.08 305.46L368.52 320.14M368.52 320.14L380.8 296.55M368.52 320.14L372.08 311.43M368.52 320.14L354.74 333.76M354.74 333.76L372.08 311.43M357.93 325.26L360.22 315.77M357.93 325.26L338.67 337.21M338.67 337.21L360.22 315.77M338.67 337.21L340.55 327.77M338.67 337.21L315.01 346.46M315.01 346.46L340.55 327.77M315.01 346.46L316.35 337.07M315.01 346.46L288.11 352.32M288.11 352.32L316.35 337.07M288.11 352.32L288.81 342.97M288.11 352.32L259.5 354.33M259.5 354.33L288.81 342.97M259.5 354.33L259.5 344.99M259.5 354.33L230.89 352.32M230.89 352.32L259.5 344.99M230.89 352.32L230.19 342.97M230.89 352.32L203.99 346.46M203.99 346.46L230.19 342.97M203.99 346.46L202.65 337.07M203.99 346.46L180.33 337.21M180.33 337.21L202.65 337.07M180.33 337.21L178.45 327.77M180.33 337.21L161.07 325.26M161.07 325.26L178.45 327.77M161.07 325.26L158.78 315.77M161.07 325.26L146.92 311.43M146.92 311.43L158.78 315.77M146.92 311.43L144.39 301.89M146.92 311.43L138.2 296.55M138.2 296.55L144.39 301.89M138.2 296.55L135.55 286.98M380.8 296.55L383.45 286.98M380.8 296.55L372.08 311.43M372.08 311.43L383.45 286.98M372.08 311.43L374.61 301.89M372.08 311.43L357.93 325.26M357.93 325.26L374.61 301.89M360.22 315.77L361.52 305.36M360.22 315.77L340.55 327.77M340.55 327.77L361.52 305.36M340.55 327.77L341.62 317.27M340.55 327.77L316.35 337.07M316.35 337.07L341.62 317.27M316.35 337.07L317.12 326.5M316.35 337.07L288.81 342.97M288.81 342.97L317.12 326.5M288.81 342.97L289.21 332.35M288.81 342.97L259.5 344.99M259.5 344.99L289.21 332.35M259.5 344.99L259.5 334.36M259.5 344.99L230.19 342.97M230.19 342.97L259.5 334.36M230.19 342.97L229.79 332.35M230.19 342.97L202.65 337.07M202.65 337.07L229.79 332.35M202.65 337.07L201.88 326.5M202.65 337.07L178.45 327.77M178.45 327.77L201.88 326.5M178.45 327.77L177.38 317.27M178.45 327.77L158.78 315.77M158.78 315.77L177.38 317.27M158.78 315.77L157.48 305.36M158.78 315.77L144.39 301.89M144.39 301.89L157.48 305.36M144.39 301.89L142.94 291.61M144.39 301.89L135.55 286.98M135.55 286.98L142.94 291.61M135.55 286.98L134.04 276.83M135.55 286.98L132.19 271.81M132.19 271.81L134.04 276.83M386.81 271.81L383.45 286.98M383.45 286.98L388.31 261.82M383.45 286.98L384.96 276.83M383.45 286.98L374.61 301.89M374.61 301.89L384.96 276.83M374.61 301.89L376.06 291.61M374.61 301.89L360.22 315.77M360.22 315.77L376.06 291.61M361.52 305.36L361.79 294.14M361.52 305.36L341.62 317.27M341.62 317.27L361.79 294.14M341.62 317.27L341.84 305.8M341.62 317.27L317.12 326.5M317.12 326.5L341.84 305.8M317.12 326.5L317.28 314.84M317.12 326.5L289.21 332.35M289.21 332.35L317.28 314.84M289.21 332.35L289.3 320.58M289.21 332.35L259.5 334.36M259.5 334.36L289.3 320.58M259.5 334.36L259.5 322.55M259.5 334.36L229.79 332.35M229.79 332.35L259.5 322.55M229.79 332.35L229.7 320.58M229.79 332.35L201.88 326.5M201.88 326.5L229.7 320.58M201.88 326.5L201.72 314.84M201.88 326.5L177.38 317.27M177.38 317.27L201.72 314.84M177.38 317.27L177.16 305.8M177.38 317.27L157.48 305.36M157.48 305.36L177.16 305.8M157.48 305.36L157.21 294.14M157.48 305.36L142.94 291.61M142.94 291.61L157.21 294.14M142.94 291.61L142.64 280.67M142.94 291.61L134.04 276.83M134.04 276.83L142.64 280.67M134.04 276.83L133.73 266.2M134.04 276.83L130.69 261.82M130.69 261.82L133.73 266.2M130.69 261.82L130.38 251.5M388.31 261.82L388.62 251.5M388.31 261.82L384.96 276.83M384.96 276.83L388.62 251.5M384.96 276.83L385.27 266.2M384.96 276.83L376.06 291.61M376.06 291.61L385.27 266.2M376.06 291.61L376.36 280.67M376.06 291.61L361.52 305.36M361.52 305.36L376.36 280.67M361.79 294.14L360.98 282.22M361.79 294.14L341.84 305.8M341.84 305.8L360.98 282.22M341.84 305.8L341.18 293.49M341.84 305.8L317.28 314.84M317.28 314.84L341.18 293.49M317.28 314.84L316.8 302.24M317.28 314.84L289.3 320.58M289.3 320.58L316.8 302.24M289.3 320.58L289.05 307.78M289.3 320.58L259.5 322.55M259.5 322.55L289.05 307.78M259.5 322.55L259.5 309.68M259.5 322.55L229.7 320.58M229.7 320.58L259.5 309.68M229.7 320.58L229.95 307.78M229.7 320.58L201.72 314.84M201.72 314.84L229.95 307.78M201.72 314.84L202.2 302.24M201.72 314.84L177.16 305.8M177.16 305.8L202.2 302.24M177.16 305.8L177.82 293.49M177.16 305.8L157.21 294.14M157.21 294.14L177.82 293.49M157.21 294.14L158.02 282.22M157.21 294.14L142.64 280.67M142.64 280.67L158.02 282.22M142.64 280.67L143.54 269.19M142.64 280.67L133.73 266.2M133.73 266.2L143.54 269.19M133.73 266.2L134.67 255.19M133.73 266.2L130.38 251.5M130.38 251.5L134.67 255.19M130.38 251.5L131.31 240.95M388.62 251.5L387.69 240.95M388.62 251.5L385.27 266.2M385.27 266.2L387.69 240.95M385.27 266.2L384.33 255.19M385.27 266.2L376.36 280.67M376.36 280.67L384.33 255.19M376.36 280.67L375.46 269.19M376.36 280.67L361.79 294.14M361.79 294.14L375.46 269.19M360.98 282.22L359.07 269.75M360.98 282.22L341.18 293.49M341.18 293.49L359.07 269.75M341.18 293.49L339.61 280.51M341.18 293.49L316.8 302.24M316.8 302.24L339.61 280.51M316.8 302.24L315.68 288.84M316.8 302.24L289.05 307.78M289.05 307.78L315.68 288.84M289.05 307.78L288.46 294.12M289.05 307.78L259.5 309.68M259.5 309.68L288.46 294.12M259.5 309.68L259.5 295.94M259.5 309.68L229.95 307.78M229.95 307.78L259.5 295.94M229.95 307.78L230.54 294.12M229.95 307.78L202.2 302.24M202.2 302.24L230.54 294.12M202.2 302.24L203.32 288.84M202.2 302.24L177.82 293.49M177.82 293.49L203.32 288.84M177.82 293.49L179.39 280.51M177.82 293.49L158.02 282.22M158.02 282.22L179.39 280.51M158.02 282.22L159.93 269.75M158.02 282.22L143.54 269.19M143.54 269.19L159.93 269.75M143.54 269.19L145.66 257.3M143.54 269.19L134.67 255.19M134.67 255.19L145.66 257.3M134.67 255.19L136.88 243.91M134.67 255.19L131.31 240.95M131.31 240.95L136.88 243.91M131.31 240.95L133.51 230.28M131.31 240.95L133.1 227.1M133.1 227.1L133.51 230.28M385.9 227.1L387.69 240.95M387.69 240.95L383.8 217.01M387.69 240.95L385.49 230.28M387.69 240.95L384.33 255.19M384.33 255.19L385.49 230.28M384.33 255.19L382.12 243.91M384.33 255.19L375.46 269.19M375.46 269.19L382.12 243.91M375.46 269.19L373.34 257.3M375.46 269.19L360.98 282.22M360.98 282.22L373.34 257.3M359.07 269.75L356.06 256.88M359.07 269.75L339.61 280.51M339.61 280.51L356.06 256.88M339.61 280.51L337.13 267M339.61 280.51L315.68 288.84M315.68 288.84L337.13 267M315.68 288.84L313.91 274.84M315.68 288.84L288.46 294.12M288.46 294.12L313.91 274.84M288.46 294.12L287.54 279.8M288.46 294.12L259.5 295.94M259.5 295.94L287.54 279.8M259.5 295.94L259.5 281.5M259.5 295.94L230.54 294.12M230.54 294.12L259.5 281.5M230.54 294.12L231.46 279.8M230.54 294.12L203.32 288.84M203.32 288.84L231.46 279.8M203.32 288.84L205.09 274.84M203.32 288.84L179.39 280.51M179.39 280.51L205.09 274.84M179.39 280.51L181.87 267M179.39 280.51L159.93 269.75M159.93 269.75L181.87 267M159.93 269.75L162.94 256.88M159.93 269.75L145.66 257.3M145.66 257.3L162.94 256.88M145.66 257.3L149.01 245.14M145.66 257.3L136.88 243.91M136.88 243.91L149.01 245.14M136.88 243.91L140.38 232.49M136.88 243.91L133.51 230.28M133.51 230.28L140.38 232.49M133.51 230.28L136.99 219.6M133.51 230.28L135.2 217.01M135.2 217.01L136.99 219.6M135.2 217.01L138.53 207.02M383.8 217.01L380.47 207.02M383.8 217.01L385.49 230.28M385.49 230.28L380.47 207.02M385.49 230.28L382.01 219.6M385.49 230.28L382.12 243.91M382.12 243.91L382.01 219.6M382.12 243.91L378.62 232.49M382.12 243.91L373.34 257.3M373.34 257.3L378.62 232.49M373.34 257.3L369.99 245.14M373.34 257.3L359.07 269.75M359.07 269.75L369.99 245.14M356.06 256.88L351.97 243.78M356.06 256.88L337.13 267M337.13 267L351.97 243.78M337.13 267L333.76 253.18M337.13 267L313.91 274.84M313.91 274.84L333.76 253.18M313.91 274.84L311.51 260.44M313.91 274.84L287.54 279.8M287.54 279.8L311.51 260.44M287.54 279.8L286.29 265.03M287.54 279.8L259.5 281.5M259.5 281.5L286.29 265.03M259.5 281.5L259.5 266.61M259.5 281.5L231.46 279.8M231.46 279.8L259.5 266.61M231.46 279.8L232.71 265.03M231.46 279.8L205.09 274.84M205.09 274.84L232.71 265.03M205.09 274.84L207.49 260.44M205.09 274.84L181.87 267M181.87 267L207.49 260.44M181.87 267L185.24 253.18M181.87 267L162.94 256.88M162.94 256.88L185.24 253.18M162.94 256.88L167.03 243.78M162.94 256.88L149.01 245.14M149.01 245.14L167.03 243.78M149.01 245.14L153.57 232.87M149.01 245.14L140.38 232.49M140.38 232.49L153.57 232.87M140.38 232.49L145.16 221.08M140.38 232.49L136.99 219.6M136.99 219.6L145.16 221.08M136.99 219.6L141.76 209.03M136.99 219.6L138.53 207.02M138.53 207.02L141.76 209.03M138.53 207.02L143.09 197.25M380.47 207.02L375.91 197.25M380.47 207.02L382.01 219.6M382.01 219.6L375.91 197.25M382.01 219.6L377.24 209.03M382.01 219.6L378.62 232.49M378.62 232.49L377.24 209.03M378.62 232.49L373.84 221.08M378.62 232.49L369.99 245.14M369.99 245.14L373.84 221.08M369.99 245.14L365.43 232.87M369.99 245.14L356.06 256.88M356.06 256.88L365.43 232.87M351.97 243.78L346.83 230.65M351.97 243.78L333.76 253.18M333.76 253.18L346.83 230.65M333.76 253.18L329.55 239.24M333.76 253.18L311.51 260.44M311.51 260.44L329.55 239.24M311.51 260.44L308.51 245.86M311.51 260.44L286.29 265.03M286.29 265.03L308.51 245.86M286.29 265.03L284.73 250.04M286.29 265.03L259.5 266.61M259.5 266.61L284.73 250.04M259.5 266.61L259.5 251.47M259.5 266.61L232.71 265.03M232.71 265.03L259.5 251.47M232.71 265.03L234.27 250.04M232.71 265.03L207.49 260.44M207.49 260.44L234.27 250.04M207.49 260.44L210.49 245.86M207.49 260.44L185.24 253.18M185.24 253.18L210.49 245.86M185.24 253.18L189.45 239.24M185.24 253.18L167.03 243.78M167.03 243.78L189.45 239.24M167.03 243.78L172.17 230.65M167.03 243.78L153.57 232.87M153.57 232.87L172.17 230.65M153.57 232.87L159.31 220.65M153.57 232.87L145.16 221.08M145.16 221.08L159.31 220.65M145.16 221.08L151.19 209.81M145.16 221.08L141.76 209.03M141.76 209.03L151.19 209.81M141.76 209.03L147.8 198.7M141.76 209.03L143.09 197.25M143.09 197.25L147.8 198.7M143.09 197.25L148.89 187.8M143.09 197.25L148.69 186.15M148.69 186.15L148.89 187.8M370.31 186.15L375.91 197.25M375.91 197.25L364.95 177.51M375.91 197.25L370.11 187.8M375.91 197.25L377.24 209.03M377.24 209.03L370.11 187.8M377.24 209.03L371.2 198.7M377.24 209.03L373.84 221.08M373.84 221.08L371.2 198.7M373.84 221.08L367.81 209.81M373.84 221.08L365.43 232.87M365.43 232.87L367.81 209.81M365.43 232.87L359.69 220.65M365.43 232.87L351.97 243.78M351.97 243.78L359.69 220.65M346.83 230.65L340.71 217.67M346.83 230.65L329.55 239.24M329.55 239.24L340.71 217.67M329.55 239.24L324.54 225.4M329.55 239.24L308.51 245.86M308.51 245.86L324.54 225.4M308.51 245.86L304.96 231.33M308.51 245.86L284.73 250.04M284.73 250.04L304.96 231.33M284.73 250.04L282.89 235.08M284.73 250.04L259.5 251.47M259.5 251.47L282.89 235.08M259.5 251.47L259.5 236.36M259.5 251.47L234.27 250.04M234.27 250.04L259.5 236.36M234.27 250.04L236.11 235.08M234.27 250.04L210.49 245.86M210.49 245.86L236.11 235.08M210.49 245.86L214.04 231.33M210.49 245.86L189.45 239.24M189.45 239.24L214.04 231.33M189.45 239.24L194.46 225.4M189.45 239.24L172.17 230.65M172.17 230.65L194.46 225.4M172.17 230.65L178.29 217.67M172.17 230.65L159.31 220.65M159.31 220.65L178.29 217.67M159.31 220.65L166.18 208.65M159.31 220.65L151.19 209.81M151.19 209.81L166.18 208.65M151.19 209.81L158.42 198.84M151.19 209.81L147.8 198.7M147.8 198.7L158.42 198.84M147.8 198.7L155.06 188.74M147.8 198.7L148.89 187.8M148.89 187.8L155.06 188.74M148.89 187.8L155.89 178.8M148.89 187.8L154.05 177.51M154.05 177.51L155.89 178.8M154.05 177.51L160.55 169.38M364.95 177.51L358.45 169.38M364.95 177.51L370.11 187.8M370.11 187.8L358.45 169.38M370.11 187.8L363.11 178.8M370.11 187.8L371.2 198.7M371.2 198.7L363.11 178.8M371.2 198.7L363.94 188.74M371.2 198.7L367.81 209.81M367.81 209.81L363.94 188.74M367.81 209.81L360.58 198.84M367.81 209.81L359.69 220.65M359.69 220.65L360.58 198.84M359.69 220.65L352.82 208.65M359.69 220.65L346.83 230.65M346.83 230.65L352.82 208.65M340.71 217.67L333.68 205.03M340.71 217.67L324.54 225.4M324.54 225.4L333.68 205.03M324.54 225.4L318.82 211.85M324.54 225.4L304.96 231.33M304.96 231.33L318.82 211.85M304.96 231.33L300.9 217.08M304.96 231.33L282.89 235.08M282.89 235.08L300.9 217.08M282.89 235.08L280.78 220.37M282.89 235.08L259.5 236.36M259.5 236.36L280.78 220.37M259.5 236.36L259.5 221.49M259.5 236.36L236.11 235.08M236.11 235.08L259.5 221.49M236.11 235.08L238.22 220.37M236.11 235.08L214.04 231.33M214.04 231.33L238.22 220.37M214.04 231.33L218.1 217.08M214.04 231.33L194.46 225.4M194.46 225.4L218.1 217.08M194.46 225.4L200.18 211.85M194.46 225.4L178.29 217.67M178.29 217.67L200.18 211.85M178.29 217.67L185.32 205.03M178.29 217.67L166.18 208.65M166.18 208.65L185.32 205.03M166.18 208.65L174.08 197.03M166.18 208.65L158.42 198.84M158.42 198.84L174.08 197.03M158.42 198.84L166.79 188.31M158.42 198.84L155.06 188.74M155.06 188.74L166.79 188.31M155.06 188.74L163.49 179.28M155.06 188.74L155.89 178.8M155.89 178.8L163.49 179.28M155.89 178.8L164.04 170.36M155.89 178.8L160.55 169.38M160.55 169.38L164.04 170.36M160.55 169.38L168.14 161.86M168.58 160.77L168.14 161.86M358.45 169.38L343.59 154.08M358.45 169.38L350.86 161.86M358.45 169.38L363.11 178.8M363.11 178.8L350.86 161.86M363.11 178.8L354.96 170.36M363.11 178.8L363.94 188.74M363.94 188.74L354.96 170.36M363.94 188.74L355.51 179.28M363.94 188.74L360.58 198.84M360.58 198.84L355.51 179.28M360.58 198.84L352.21 188.31M360.58 198.84L352.82 208.65M352.82 208.65L352.21 188.31M352.82 208.65L344.92 197.03M352.82 208.65L340.71 217.67M340.71 217.67L344.92 197.03M333.68 205.03L325.86 192.92M333.68 205.03L318.82 211.85M318.82 211.85L325.86 192.92M318.82 211.85L312.46 198.81M318.82 211.85L300.9 217.08M300.9 217.08L312.46 198.81M300.9 217.08L296.41 203.32M300.9 217.08L280.78 220.37M280.78 220.37L296.41 203.32M280.78 220.37L278.46 206.15M280.78 220.37L259.5 221.49M259.5 221.49L278.46 206.15M259.5 221.49L259.5 207.11M259.5 221.49L238.22 220.37M238.22 220.37L259.5 207.11M238.22 220.37L240.54 206.15M238.22 220.37L218.1 217.08M218.1 217.08L240.54 206.15M218.1 217.08L222.59 203.32M218.1 217.08L200.18 211.85M200.18 211.85L222.59 203.32M200.18 211.85L206.54 198.81M200.18 211.85L185.32 205.03M185.32 205.03L206.54 198.81M185.32 205.03L193.14 192.92M185.32 205.03L174.08 197.03M174.08 197.03L193.14 192.92M174.08 197.03L182.92 185.97M174.08 197.03L166.79 188.31M166.79 188.31L182.92 185.97M166.79 188.31L176.18 178.36M166.79 188.31L163.49 179.28M163.49 179.28L176.18 178.36M163.49 179.28L173 170.45M163.49 179.28L164.04 170.36M164.04 170.36L173 170.45M164.04 170.36L173.29 162.59M164.04 170.36L168.14 161.86M168.14 161.86L173.29 162.59M168.14 161.86L176.8 155.07M168.14 161.86L175.41 154.08M175.41 154.08L176.8 155.07M175.41 154.08L183.21 148.14M343.59 154.08L335.79 148.14M343.59 154.08L350.86 161.86M350.86 161.86L335.79 148.14M350.86 161.86L342.2 155.07M350.86 161.86L354.96 170.36M354.96 170.36L342.2 155.07M354.96 170.36L345.71 162.59M354.96 170.36L355.51 179.28M355.51 179.28L345.71 162.59M355.51 179.28L346 170.45M355.51 179.28L352.21 188.31M352.21 188.31L346 170.45M352.21 188.31L342.82 178.36M352.21 188.31L344.92 197.03M344.92 197.03L342.82 178.36M344.92 197.03L336.08 185.97M344.92 197.03L333.68 205.03M333.68 205.03L336.08 185.97M325.86 192.92L317.35 181.5M325.86 192.92L312.46 198.81M312.46 198.81L317.35 181.5M312.46 198.81L305.58 186.47M312.46 198.81L296.41 203.32M296.41 203.32L305.58 186.47M296.41 203.32L291.57 190.26M296.41 203.32L278.46 206.15M278.46 206.15L291.57 190.26M278.46 206.15L275.95 192.63M278.46 206.15L259.5 207.11M259.5 207.11L275.95 192.63M259.5 207.11L259.5 193.44M259.5 207.11L240.54 206.15M240.54 206.15L259.5 193.44M240.54 206.15L243.05 192.63M240.54 206.15L222.59 203.32M222.59 203.32L243.05 192.63M222.59 203.32L227.43 190.26M222.59 203.32L206.54 198.81M206.54 198.81L227.43 190.26M206.54 198.81L213.42 186.47M206.54 198.81L193.14 192.92M193.14 192.92L213.42 186.47M193.14 192.92L201.65 181.5M193.14 192.92L182.92 185.97M182.92 185.97L201.65 181.5M182.92 185.97L192.58 175.62M182.92 185.97L176.18 178.36M176.18 178.36L192.58 175.62M176.18 178.36L186.5 169.13M176.18 178.36L173 170.45M173 170.45L186.5 169.13M173 170.45L183.51 162.36M173 170.45L173.29 162.59M173.29 162.59L183.51 162.36M173.29 162.59L183.55 155.6M173.29 162.59L176.8 155.07M176.8 155.07L183.55 155.6M176.8 155.07L186.45 149.09M176.8 155.07L183.21 148.14M183.21 148.14L186.45 149.09M183.21 148.14L191.95 143.07M183.21 148.14L192.12 142.01M192.12 142.01L191.95 143.07M192.12 142.01L199.72 137.71M326.88 142.01L319.28 137.71M326.88 142.01L335.79 148.14M335.79 148.14L319.28 137.71M335.79 148.14L327.05 143.07M335.79 148.14L342.2 155.07M342.2 155.07L327.05 143.07M342.2 155.07L332.55 149.09M342.2 155.07L345.71 162.59M345.71 162.59L332.55 149.09M345.71 162.59L335.45 155.6M345.71 162.59L346 170.45M346 170.45L335.45 155.6M346 170.45L335.49 162.36M346 170.45L342.82 178.36M342.82 178.36L335.49 162.36M342.82 178.36L332.5 169.13M342.82 178.36L336.08 185.97M336.08 185.97L332.5 169.13M336.08 185.97L326.42 175.62M336.08 185.97L325.86 192.92M325.86 192.92L326.42 175.62M317.35 181.5L308.29 170.94M317.35 181.5L305.58 186.47M305.58 186.47L308.29 170.94M305.58 186.47L298.28 175M305.58 186.47L291.57 190.26M291.57 190.26L298.28 175M291.57 190.26L286.44 178.08M291.57 190.26L275.95 192.63M275.95 192.63L286.44 178.08M275.95 192.63L273.31 180M275.95 192.63L259.5 193.44M259.5 193.44L273.31 180M259.5 193.44L259.5 180.66M259.5 193.44L243.05 192.63M243.05 192.63L259.5 180.66M243.05 192.63L245.69 180M243.05 192.63L227.43 190.26M227.43 190.26L245.69 180M227.43 190.26L232.56 178.08M227.43 190.26L213.42 186.47M213.42 186.47L232.56 178.08M213.42 186.47L220.72 175M213.42 186.47L201.65 181.5M201.65 181.5L220.72 175M201.65 181.5L210.71 170.94M201.65 181.5L192.58 175.62M192.58 175.62L210.71 170.94M192.58 175.62L202.92 166.11M192.58 175.62L186.5 169.13M186.5 169.13L202.92 166.11M186.5 169.13L197.6 160.76M186.5 169.13L183.51 162.36M183.51 162.36L197.6 160.76M183.51 162.36L194.87 155.14M183.51 162.36L183.55 155.6M183.55 155.6L194.87 155.14M183.55 155.6L194.72 149.49M183.55 155.6L186.45 149.09M186.45 149.09L194.72 149.49M186.45 149.09L197.02 144.03M186.45 149.09L191.95 143.07M191.95 143.07L197.02 144.03M191.95 143.07L201.57 138.94M191.95 143.07L199.72 137.71M199.72 137.71L201.57 138.94M199.72 137.71L208.11 134.39M199.72 137.71L209.39 133.16M209.39 133.16L208.11 134.39M209.39 133.16L216.33 130.51M309.61 133.16L302.67 130.51M309.61 133.16L319.28 137.71M319.28 137.71L302.67 130.51M319.28 137.71L310.89 134.39M319.28 137.71L327.05 143.07M327.05 143.07L310.89 134.39M327.05 143.07L317.43 138.94M327.05 143.07L332.55 149.09M332.55 149.09L317.43 138.94M332.55 149.09L321.98 144.03M332.55 149.09L335.45 155.6M335.45 155.6L321.98 144.03M335.45 155.6L324.28 149.49M335.45 155.6L335.49 162.36M335.49 162.36L324.28 149.49M335.49 162.36L324.13 155.14M335.49 162.36L332.5 169.13M332.5 169.13L324.13 155.14M332.5 169.13L321.4 160.76M332.5 169.13L326.42 175.62M326.42 175.62L321.4 160.76M326.42 175.62L316.08 166.11M326.42 175.62L317.35 181.5M317.35 181.5L316.08 166.11M308.29 170.94L298.81 161.37M308.29 170.94L298.28 175M298.28 175L298.81 161.37M298.28 175L290.67 164.54M298.28 175L286.44 178.08M286.44 178.08L290.67 164.54M286.44 178.08L281.12 166.94M286.44 178.08L273.31 180M273.31 180L281.12 166.94M273.31 180L270.57 168.44M273.31 180L259.5 180.66M259.5 180.66L270.57 168.44M259.5 180.66L259.5 168.95M259.5 180.66L245.69 180M245.69 180L259.5 168.95M245.69 180L248.43 168.44M245.69 180L232.56 178.08M232.56 178.08L248.43 168.44M232.56 178.08L237.88 166.94M232.56 178.08L220.72 175M220.72 175L237.88 166.94M220.72 175L228.33 164.54M220.72 175L210.71 170.94M210.71 170.94L228.33 164.54M210.71 170.94L220.19 161.37M210.71 170.94L202.92 166.11M202.92 166.11L220.19 161.37M202.92 166.11L213.79 157.57M202.92 166.11L197.6 160.76M197.6 160.76L213.79 157.57M197.6 160.76L209.35 153.34M197.6 160.76L194.87 155.14M194.87 155.14L209.35 153.34M194.87 155.14L206.97 148.88M194.87 155.14L194.72 149.49M194.72 149.49L206.97 148.88M194.72 149.49L206.68 144.36M194.72 149.49L197.02 144.03M197.02 144.03L206.68 144.36M197.02 144.03L208.4 139.96M197.02 144.03L201.57 138.94M201.57 138.94L208.4 139.96M201.57 138.94L211.98 135.84M201.57 138.94L208.11 134.39M208.11 134.39L211.98 135.84M208.11 134.39L217.24 132.14M208.11 134.39L216.33 130.51M216.33 130.51L217.24 132.14M216.33 130.51L223.92 128.96M216.33 130.51L225.92 127.4M225.92 127.4L223.92 128.96M225.92 127.4L231.78 126.4M236.54 125.13L231.78 126.4M236.54 125.13L240.52 124.53M282.46 125.13L278.48 124.53M293.08 127.4L278.48 124.53M293.08 127.4L287.22 126.4M293.08 127.4L302.67 130.51M302.67 130.51L287.22 126.4M302.67 130.51L295.08 128.96M302.67 130.51L310.89 134.39M310.89 134.39L295.08 128.96M310.89 134.39L301.76 132.14M310.89 134.39L317.43 138.94M317.43 138.94L301.76 132.14M317.43 138.94L307.02 135.84M317.43 138.94L321.98 144.03M321.98 144.03L307.02 135.84M321.98 144.03L310.6 139.96M321.98 144.03L324.28 149.49M324.28 149.49L310.6 139.96M324.28 149.49L312.32 144.36M324.28 149.49L324.13 155.14M324.13 155.14L312.32 144.36M324.13 155.14L312.03 148.88M324.13 155.14L321.4 160.76M321.4 160.76L312.03 148.88M321.4 160.76L309.65 153.34M321.4 160.76L316.08 166.11M316.08 166.11L309.65 153.34M316.08 166.11L305.21 157.57M316.08 166.11L308.29 170.94M308.29 170.94L305.21 157.57M298.81 161.37L289.05 152.9M298.81 161.37L290.67 164.54M290.67 164.54L289.05 152.9M290.67 164.54L282.88 155.23M290.67 164.54L281.12 166.94M281.12 166.94L282.88 155.23M281.12 166.94L275.69 156.97M281.12 166.94L270.57 168.44M270.57 168.44L275.69 156.97M270.57 168.44L267.78 158.06M270.57 168.44L259.5 168.95M259.5 168.95L267.78 158.06M259.5 168.95L259.5 158.43M259.5 168.95L248.43 168.44M248.43 168.44L259.5 158.43M248.43 168.44L251.22 158.06M248.43 168.44L237.88 166.94M237.88 166.94L251.22 158.06M237.88 166.94L243.31 156.97M237.88 166.94L228.33 164.54M228.33 164.54L243.31 156.97M228.33 164.54L236.12 155.23M228.33 164.54L220.19 161.37M220.19 161.37L236.12 155.23M220.19 161.37L229.95 152.9M220.19 161.37L213.79 157.57M213.79 157.57L229.95 152.9M213.79 157.57L225.04 150.11M213.79 157.57L209.35 153.34M209.35 153.34L225.04 150.11M209.35 153.34L221.57 146.99M209.35 153.34L206.97 148.88M206.97 148.88L221.57 146.99M206.97 148.88L219.65 143.66M206.97 148.88L206.68 144.36M206.68 144.36L219.65 143.66M206.68 144.36L219.29 140.28M206.68 144.36L208.4 139.96M208.4 139.96L219.29 140.28M208.4 139.96L220.47 136.96M208.4 139.96L211.98 135.84M211.98 135.84L220.47 136.96M211.98 135.84L223.1 133.83M211.98 135.84L217.24 132.14M217.24 132.14L223.1 133.83M217.24 132.14L227.04 131.01M217.24 132.14L223.92 128.96M223.92 128.96L227.04 131.01M223.92 128.96L232.11 128.57M223.92 128.96L231.78 126.4M231.78 126.4L232.11 128.57M231.78 126.4L238.12 126.6M231.78 126.4L240.52 124.53M240.52 124.53L238.12 126.6M240.52 124.53L244.84 125.15M240.52 124.53L249.86 123.39M249.86 123.39L244.84 125.15M249.86 123.39L252.05 124.27M249.86 123.39L259.5 123M259.5 123L252.05 124.27M259.5 123L259.5 123.97M259.5 123L269.14 123.39M269.14 123.39L259.5 123.97M269.14 123.39L266.95 124.27M269.14 123.39L278.48 124.53M278.48 124.53L266.95 124.27M278.48 124.53L274.16 125.15M278.48 124.53L287.22 126.4M287.22 126.4L274.16 125.15M287.22 126.4L280.88 126.6M287.22 126.4L295.08 128.96M295.08 128.96L280.88 126.6M295.08 128.96L286.89 128.57M295.08 128.96L301.76 132.14M301.76 132.14L286.89 128.57M301.76 132.14L291.96 131.01M301.76 132.14L307.02 135.84M307.02 135.84L291.96 131.01M307.02 135.84L295.9 133.83M307.02 135.84L310.6 139.96M310.6 139.96L295.9 133.83M310.6 139.96L298.53 136.96M310.6 139.96L312.32 144.36M312.32 144.36L298.53 136.96M312.32 144.36L299.71 140.28M312.32 144.36L312.03 148.88M312.03 148.88L299.71 140.28M312.03 148.88L299.35 143.66M312.03 148.88L309.65 153.34M309.65 153.34L299.35 143.66M309.65 153.34L297.43 146.99M309.65 153.34L305.21 157.57M305.21 157.57L297.43 146.99M305.21 157.57L293.96 150.11M305.21 157.57L298.81 161.37M298.81 161.37L293.96 150.11M289.05 152.9L279.16 145.63M289.05 152.9L282.88 155.23M282.88 155.23L279.16 145.63M282.88 155.23L275.02 147.14M282.88 155.23L275.69 156.97M275.69 156.97L275.02 147.14M275.69 156.97L270.23 148.27M275.69 156.97L267.78 158.06M267.78 158.06L270.23 148.27M267.78 158.06L264.98 148.97M267.78 158.06L259.5 158.43M259.5 158.43L264.98 148.97M259.5 158.43L259.5 149.21M259.5 158.43L251.22 158.06M251.22 158.06L259.5 149.21M251.22 158.06L254.02 148.97M251.22 158.06L243.31 156.97M243.31 156.97L254.02 148.97M243.31 156.97L248.77 148.27M243.31 156.97L236.12 155.23M236.12 155.23L248.77 148.27M236.12 155.23L243.98 147.14M236.12 155.23L229.95 152.9M229.95 152.9L243.98 147.14M229.95 152.9L239.84 145.63M229.95 152.9L225.04 150.11M225.04 150.11L239.84 145.63M225.04 150.11L236.51 143.81M225.04 150.11L221.57 146.99M221.57 146.99L236.51 143.81M221.57 146.99L234.12 141.76M221.57 146.99L219.65 143.66M219.65 143.66L234.12 141.76M219.65 143.66L232.74 139.57M219.65 143.66L219.29 140.28M219.29 140.28L232.74 139.57M219.29 140.28L232.41 137.31M219.29 140.28L220.47 136.96M220.47 136.96L232.41 137.31M220.47 136.96L233.12 135.09M220.47 136.96L223.1 133.83M223.1 133.83L233.12 135.09M223.1 133.83L234.81 132.98M223.1 133.83L227.04 131.01M227.04 131.01L234.81 132.98M227.04 131.01L237.42 131.07M227.04 131.01L232.11 128.57M232.11 128.57L237.42 131.07M232.11 128.57L240.82 129.41M232.11 128.57L238.12 126.6M238.12 126.6L240.82 129.41M238.12 126.6L244.89 128.06M238.12 126.6L244.84 125.15M244.84 125.15L244.89 128.06M244.84 125.15L249.47 127.06M244.84 125.15L252.05 124.27M252.05 124.27L249.47 127.06M252.05 124.27L254.4 126.45M252.05 124.27L259.5 123.97M259.5 123.97L254.4 126.45M259.5 123.97L259.5 126.25M259.5 123.97L266.95 124.27M266.95 124.27L259.5 126.25M266.95 124.27L264.6 126.45M266.95 124.27L274.16 125.15M274.16 125.15L264.6 126.45M274.16 125.15L269.53 127.06M274.16 125.15L280.88 126.6M280.88 126.6L269.53 127.06M280.88 126.6L274.11 128.06M280.88 126.6L286.89 128.57M286.89 128.57L274.11 128.06M286.89 128.57L278.18 129.41M286.89 128.57L291.96 131.01M291.96 131.01L278.18 129.41M291.96 131.01L281.58 131.07M291.96 131.01L295.9 133.83M295.9 133.83L281.58 131.07M295.9 133.83L284.19 132.98M295.9 133.83L298.53 136.96M298.53 136.96L284.19 132.98M298.53 136.96L285.88 135.09M298.53 136.96L299.71 140.28M299.71 140.28L285.88 135.09M299.71 140.28L286.59 137.31M299.71 140.28L299.35 143.66M299.35 143.66L286.59 137.31M299.35 143.66L286.26 139.57M299.35 143.66L297.43 146.99M297.43 146.99L286.26 139.57M297.43 146.99L284.88 141.76M297.43 146.99L293.96 150.11M293.96 150.11L284.88 141.76M293.96 150.11L282.49 143.81M293.96 150.11L289.05 152.9M289.05 152.9L282.49 143.81M279.16 145.63L269.26 139.63M279.16 145.63L275.02 147.14M275.02 147.14L269.26 139.63M275.02 147.14L267.19 140.36M275.02 147.14L270.23 148.27M270.23 148.27L267.19 140.36M270.23 148.27L264.81 140.91M270.23 148.27L264.98 148.97M264.98 148.97L264.81 140.91M264.98 148.97L262.21 141.25M264.98 148.97L259.5 149.21M259.5 149.21L262.21 141.25M259.5 149.21L259.5 141.36M259.5 149.21L254.02 148.97M254.02 148.97L259.5 141.36M254.02 148.97L256.79 141.25M254.02 148.97L248.77 148.27M248.77 148.27L256.79 141.25M248.77 148.27L254.19 140.91M248.77 148.27L243.98 147.14M243.98 147.14L254.19 140.91M243.98 147.14L251.81 140.36M243.98 147.14L239.84 145.63M239.84 145.63L251.81 140.36M239.84 145.63L249.74 139.63M239.84 145.63L236.51 143.81M236.51 143.81L249.74 139.63M236.51 143.81L248.05 138.74M236.51 143.81L234.12 141.76M234.12 141.76L248.05 138.74M234.12 141.76L246.82 137.73M234.12 141.76L232.74 139.57M232.74 139.57L246.82 137.73M232.74 139.57L246.08 136.64M232.74 139.57L232.41 137.31M232.41 137.31L246.08 136.64M232.41 137.31L245.87 135.52M232.41 137.31L233.12 135.09M233.12 135.09L245.87 135.52M233.12 135.09L246.18 134.4M233.12 135.09L234.81 132.98M234.81 132.98L246.18 134.4M234.81 132.98L246.99 133.34M234.81 132.98L237.42 131.07M237.42 131.07L246.99 133.34M237.42 131.07L248.28 132.36M237.42 131.07L240.82 129.41M240.82 129.41L248.28 132.36M240.82 129.41L249.98 131.51M240.82 129.41L244.89 128.06M244.89 128.06L249.98 131.51M244.89 128.06L252.04 130.82M244.89 128.06L249.47 127.06M249.47 127.06L252.04 130.82M249.47 127.06L254.37 130.3M249.47 127.06L254.4 126.45M254.4 126.45L254.37 130.3M254.4 126.45L256.89 129.99M254.4 126.45L259.5 126.25M259.5 126.25L256.89 129.99M259.5 126.25L259.5 129.88M259.5 126.25L264.6 126.45M264.6 126.45L259.5 129.88M264.6 126.45L262.11 129.99M264.6 126.45L269.53 127.06M269.53 127.06L262.11 129.99M269.53 127.06L264.63 130.3M269.53 127.06L274.11 128.06M274.11 128.06L264.63 130.3M274.11 128.06L266.96 130.82M274.11 128.06L278.18 129.41M278.18 129.41L266.96 130.82M278.18 129.41L269.02 131.51M278.18 129.41L281.58 131.07M281.58 131.07L269.02 131.51M281.58 131.07L270.72 132.36M281.58 131.07L284.19 132.98M284.19 132.98L270.72 132.36M284.19 132.98L272.01 133.34M284.19 132.98L285.88 135.09M285.88 135.09L272.01 133.34M285.88 135.09L272.82 134.4M285.88 135.09L286.59 137.31M286.59 137.31L272.82 134.4M286.59 137.31L273.13 135.52M286.59 137.31L286.26 139.57M286.26 139.57L273.13 135.52M286.26 139.57L272.92 136.64M286.26 139.57L284.88 141.76M284.88 141.76L272.92 136.64M284.88 141.76L272.18 137.73M284.88 141.76L282.49 143.81M282.49 143.81L272.18 137.73M282.49 143.81L270.95 138.74M282.49 143.81L279.16 145.63M279.16 145.63L270.95 138.74M269.26 139.63L259.5 134.91M269.26 139.63L267.19 140.36M267.19 140.36L259.5 134.91M267.19 140.36L259.5 134.91M267.19 140.36L264.81 140.91M264.81 140.91L259.5 134.91M264.81 140.91L259.5 134.91M264.81 140.91L262.21 141.25M262.21 141.25L259.5 134.91M262.21 141.25L259.5 134.91M262.21 141.25L259.5 141.36M259.5 141.36L259.5 134.91M259.5 141.36L259.5 134.91M259.5 141.36L256.79 141.25M256.79 141.25L259.5 134.91M256.79 141.25L259.5 134.91M256.79 141.25L254.19 140.91M254.19 140.91L259.5 134.91M254.19 140.91L259.5 134.91M254.19 140.91L251.81 140.36M251.81 140.36L259.5 134.91M251.81 140.36L259.5 134.91M251.81 140.36L249.74 139.63M249.74 139.63L259.5 134.91M249.74 139.63L259.5 134.91M249.74 139.63L248.05 138.74M248.05 138.74L259.5 134.91M248.05 138.74L259.5 134.91M248.05 138.74L246.82 137.73M246.82 137.73L259.5 134.91M246.82 137.73L259.5 134.91M246.82 137.73L246.08 136.64M246.08 136.64L259.5 134.91M246.08 136.64L259.5 134.91M246.08 136.64L245.87 135.52M245.87 135.52L259.5 134.91M245.87 135.52L259.5 134.91M245.87 135.52L246.18 134.4M246.18 134.4L259.5 134.91M246.18 134.4L259.5 134.91M246.18 134.4L246.99 133.34M246.99 133.34L259.5 134.91M246.99 133.34L259.5 134.91M246.99 133.34L248.28 132.36M248.28 132.36L259.5 134.91M248.28 132.36L259.5 134.91M248.28 132.36L249.98 131.51M249.98 131.51L259.5 134.91M249.98 131.51L259.5 134.91M249.98 131.51L252.04 130.82M252.04 130.82L259.5 134.91M252.04 130.82L259.5 134.91M252.04 130.82L254.37 130.3M254.37 130.3L259.5 134.91M254.37 130.3L259.5 134.91M254.37 130.3L256.89 129.99M256.89 129.99L259.5 134.91M256.89 129.99L259.5 134.91M256.89 129.99L259.5 129.88M259.5 129.88L259.5 134.91M259.5 129.88L259.5 134.91M259.5 129.88L262.11 129.99M262.11 129.99L259.5 134.91M262.11 129.99L259.5 134.91M262.11 129.99L264.63 130.3M264.63 130.3L259.5 134.91M264.63 130.3L259.5 134.91M264.63 130.3L266.96 130.82M266.96 130.82L259.5 134.91M266.96 130.82L259.5 134.91M266.96 130.82L269.02 131.51M269.02 131.51L259.5 134.91M269.02 131.51L259.5 134.91M269.02 131.51L270.72 132.36M270.72 132.36L259.5 134.91M270.72 132.36L259.5 134.91M270.72 132.36L272.01 133.34M272.01 133.34L259.5 134.91M272.01 133.34L259.5 134.91M272.01 133.34L272.82 134.4M272.82 134.4L259.5 134.91M272.82 134.4L259.5 134.91M272.82 134.4L273.13 135.52M273.13 135.52L259.5 134.91M273.13 135.52L259.5 134.91M273.13 135.52L272.92 136.64M272.92 136.64L259.5 134.91M272.92 136.64L259.5 134.91M272.92 136.64L272.18 137.73M272.18 137.73L259.5 134.91M272.18 137.73L259.5 134.91M272.18 137.73L270.95 138.74M270.95 138.74L259.5 134.91M270.95 138.74L259.5 134.91M270.95 138.74L269.26 139.63M269.26 139.63L259.5 134.91" stroke="#fff" stroke-width="1.05" fill="none" stroke-linecap="round"/>
<circle cx="259.5" cy="252.16" r="127.9" fill="none" stroke="#fff" stroke-width="1.4"/>
</svg>
<div class="a" style="left:5px;top:4px;font-size:12px;line-height:14px;color:#ececec;text-shadow:1px 1px 0 #000;letter-spacing:0.55px;white-space:pre;will-change:transform">Perspective</div>
<svg class="a" style="left:10px;top:435px" width="70" height="50"><path d="M26.9 33V14.3" stroke="#10e818" stroke-width="2"/><path d="M26.9 32.4L42.5 41.9" stroke="#f01818" stroke-width="2"/><path d="M26.9 32.4L12.2 41.5" stroke="#1020f0" stroke-width="2"/><path d="M26.9 4.3L30.4 9.5L33.8 4.3M30.4 9.5L29.2 13.8" stroke="#10e818" stroke-width="1.1" fill="none"/><path d="M45.9 38.2L52.9 45.2M52.9 38.2L45.9 45.2" stroke="#f01818" stroke-width="1.2" fill="none"/><path d="M6.8 38.6H12.6L6.8 44.8H12.6" stroke="#1020f0" stroke-width="1.2" fill="none"/></svg>
</div>

<!-- right panel -->
<div class="gb" style="left:537px;top:11px;width:256px;height:563px"></div>
<div class="gbt" style="left:544px;top:5px">Propriétés de découpe</div>
<div class="gb" style="left:542px;top:28px;width:246px;height:85px"></div>
<div class="gbt" style="left:549px;top:22px">Préparation</div>
<div class="txt" style="left:608px;top:42px">Type :</div>
<div class="a" style="left:642px;top:39px;width:141px;height:19px;background:#2a2a2a;border:1px solid #363636;box-shadow:inset 1px 1px 0 #303030"></div>
<div class="txt" style="left:647px;top:43px">Coudre</div>
<div class="a" style="left:766px;top:41px;width:16px;height:16px;background:#404040;border-left:1px solid #4a4a4a;border-top:1px solid #4a4a4a;border-right:2px solid #2e2e2e;border-bottom:2px solid #2e2e2e;box-shadow:inset 1px 1px 0 #333"></div>
<svg class="a" style="left:766px;top:41px" width="16" height="16"><path d="M3.6 5.8h7.9L7.55 10.1Z" fill="#c8c8c8"/></svg>
<div class="txt" style="left:547px;top:66px">Tolerance Jointure:</div>
<div class="a" style="left:642px;top:63px;width:90px;height:19px;background:#3a3a3a;border:1px solid #333"></div>
<div class="txt" style="left:645px;top:67px;color:#8a8a8a">0.001</div>
<div class="a" style="left:734px;top:63px;width:49px;height:19px;background:#3a3a3a;border:1px solid #333"></div>
<div class="txt" style="left:737px;top:67px;color:#8a8a8a">mm</div>
<div class="a" style="left:767px;top:66px;width:14px;height:13px;background:#3e3e3e;border:1px solid #353535"></div>
<svg class="a" style="left:766px;top:65px" width="16" height="15"><path d="M4.2 5.8h7.2L7.8 9.8Z" fill="#2e2e2e"/></svg>
<div class="a" style="left:705px;top:88px;width:79px;height:22px;background:#444;border:1px solid #333;box-shadow:inset 1px 1px 0 #4a4a4a,-1px 1px 0 #383838"></div>
<div class="txt" style="left:705px;top:92px;width:79px;text-align:center;transform-origin:50% 0">Appliquer</div>
<div class="gb" style="left:542px;top:125px;width:246px;height:52px"></div>
<div class="gbt" style="left:549px;top:119px">Points de découpe</div>
<div class="txt" style="left:547px;top:137px">0  points de découpe définis.</div>
<div class="a" style="left:675px;top:148px;width:109px;height:22px;background:#444;border:1px solid #333;box-shadow:inset 1px 1px 0 #4a4a4a,-1px 1px 0 #383838"></div>
<div class="txt" style="left:675px;top:152px;width:109px;text-align:center;color:#8a8a8a;transform-origin:50% 0">Découper !</div>
</body></html>
